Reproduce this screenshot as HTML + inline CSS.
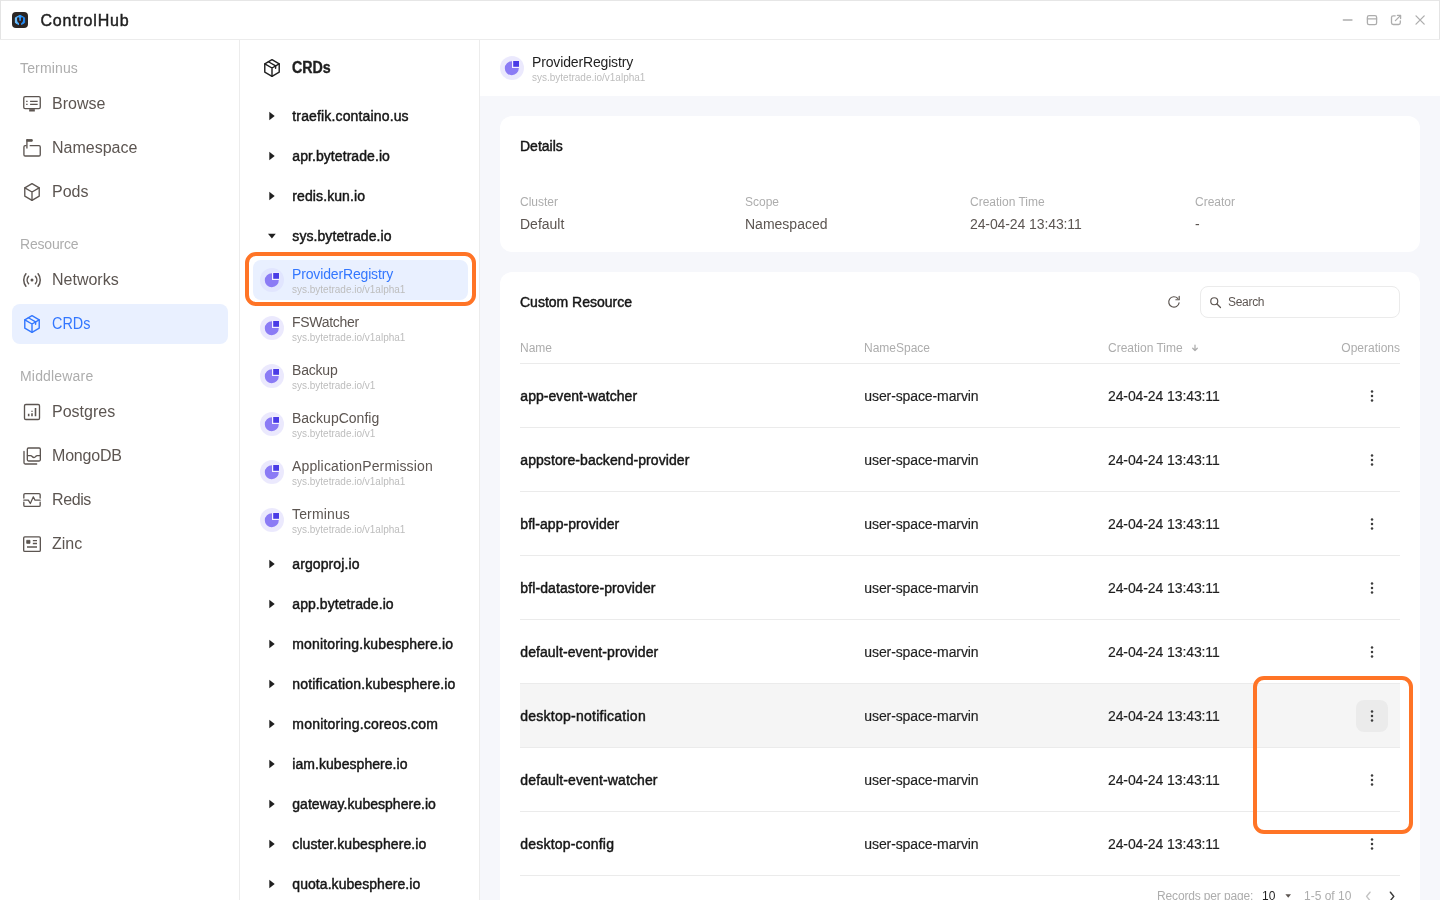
<!DOCTYPE html>
<html lang="en">
<head>
<meta charset="utf-8">
<title>ControlHub</title>
<style>
*{box-sizing:border-box;margin:0;padding:0}
html,body{width:1440px;height:900px;overflow:hidden;background:#fff}
body{font-family:"Liberation Sans",Arial,sans-serif;color:#1f1f1f;position:relative;-webkit-font-smoothing:antialiased}
#root{position:absolute;left:0;top:0;width:1440px;height:900px;will-change:transform}
.abs{position:absolute}
.t{position:absolute;white-space:nowrap;line-height:1}
svg{display:block;overflow:visible}
/* frame */
#frame-top{left:0;top:0;width:1440px;height:1px;background:#e6e6e6}
#frame-left{left:0;top:0;width:1px;height:39px;background:#e4e4e4}
#frame-right{left:1439px;top:0;width:1px;height:39px;background:#e4e4e4}
#hdr-line{left:0;top:39px;width:1440px;height:1px;background:#ececec}
#side-line{left:239px;top:40px;width:1px;height:860px;background:#ececec}
#mid-line{left:479px;top:40px;width:1px;height:860px;background:#ececec}
/* header */
#logo{left:12px;top:12px;width:16px;height:16px}
#app-title{left:40.5px;top:13px;letter-spacing:.8px;font-size:16px;color:#1f1f1f;-webkit-text-stroke:.45px #1f1f1f}
/* sidebar */
.sec{font-size:14px;color:#adadad;left:20px}
.nav{font-size:16px;color:#5c5551;left:52px}
.nav.sel{color:#3377ff}
#nav-sel{left:12px;top:304px;width:216px;height:40px;border-radius:8px;background:#e9f0ff}
.ico{position:absolute;width:20px;height:20px;left:22px}
/* mid column */
.grp{font-size:14px;color:#161616;left:292.3px;-webkit-text-stroke:.45px #161616}
.kid{font-size:14px;color:#5c5551;left:292px}
.kid.sel{color:#3377ff}
.sub{font-size:10px;color:#bdbdbd;left:292px}
.pie{position:absolute;width:24px;height:24px}
#kid-sel{left:252.5px;top:260px;width:215px;height:40px;border-radius:8px;background:#e9f0ff}
.hl{position:absolute;border:4px solid #ff7426;border-radius:11px}
/* main */
#main-bg{left:480px;top:96px;width:960px;height:804px;background:#f6f7fb}
.card{position:absolute;background:#fff;border-radius:12px}
.h500{font-size:14px;color:#161616;-webkit-text-stroke:.45px #161616}
.lbl{font-size:12px;color:#adadad}
.val{font-size:14px;color:#5c5551}
.th{font-size:12px;color:#adadad}
.row-line{position:absolute;left:520px;width:880px;height:1px;background:#ebebeb}
.nm{font-size:14px;color:#161616;left:520.3px;-webkit-text-stroke:.45px #161616}
.ns{font-size:14px;color:#1f1f1f;left:864.3px;-webkit-text-stroke:.15px #1f1f1f}
.tm{font-size:14px;color:#1f1f1f;left:1108px;-webkit-text-stroke:.15px #1f1f1f}
.pg{font-size:12px;color:#adadad}
</style>
</head>
<body>
<div id="root">
<!-- SECTION:FRAME -->
<div class="abs" id="main-bg"></div>
<div class="abs" id="frame-top"></div>
<div class="abs" id="frame-left"></div>
<div class="abs" id="frame-right"></div>
<div class="abs" id="hdr-line"></div>
<div class="abs" id="side-line"></div>
<div class="abs" id="mid-line"></div>
<!-- SECTION:HEADER -->
<svg class="abs" id="logo" viewBox="0 0 16 16">
<defs><linearGradient id="lg" x1="0" y1="0" x2="1" y2="0"><stop offset="0" stop-color="#7cc8ff"/><stop offset=".45" stop-color="#2f9dff"/><stop offset="1" stop-color="#1f86f2"/></linearGradient></defs>
<rect x="0" y="0" width="16" height="16" rx="4" fill="#2b2624"/>
<path d="M8 3.2L12.6 5.8V10.7L8 13.3L3.4 10.7V5.8Z" fill="url(#lg)" stroke="url(#lg)" stroke-width="1" stroke-linejoin="round"/>
<path d="M6.2 6.3V8Q6.2 10 8.1 10Q10 10 10 8V6.3M8.1 10V13.6" fill="none" stroke="#2b1f1f" stroke-width="2.2" stroke-linecap="round" stroke-linejoin="round"/>
</svg>
<div class="t" id="app-title">ControlHub</div>
<svg class="abs" style="left:1336px;top:10px;width:96px;height:20px" viewBox="1336 10 96 20" fill="none" stroke="#adadad" stroke-width="1.3" stroke-linecap="round" stroke-linejoin="round">
<path d="M1343.3 20 H1352"/>
<rect x="1367.4" y="15.6" width="9.2" height="9" rx="1.6"/><path d="M1367.4 18.9 H1376.6"/>
<path d="M1395.2 15.8 H1393.2 Q1391.5 15.8 1391.5 17.5 V22.8 Q1391.5 24.5 1393.2 24.5 H1398.6 Q1400.3 24.5 1400.3 22.8 V20.8"/><path d="M1395.4 20.6 L1400.4 15.6 M1397.4 15.4 H1400.6 V18.6"/>
<path d="M1416 15.9 L1424.2 24.1 M1424.2 15.9 L1416 24.1"/>
</svg>
<!-- SECTION:SIDEBAR -->
<div class="abs" id="nav-sel"></div>
<div class="t sec" style="top:61px;letter-spacing:0.15px">Terminus</div>
<div class="t sec" style="top:237px;letter-spacing:-0.2px">Resource</div>
<div class="t sec" style="top:369px;letter-spacing:0.18px">Middleware</div>
<div class="t nav" style="top:96px">Browse</div>
<div class="t nav" style="top:140px">Namespace</div>
<div class="t nav" style="top:184px">Pods</div>
<div class="t nav" style="top:272px">Networks</div>
<div class="t nav sel" style="top:316px;transform:scaleX(.9);transform-origin:0 0">CRDs</div>
<div class="t nav" style="top:404px">Postgres</div>
<div class="t nav" style="top:448px;letter-spacing:-0.2px">MongoDB</div>
<div class="t nav" style="top:492px;letter-spacing:-0.4px">Redis</div>
<div class="t nav" style="top:536px">Zinc</div>
<svg class="ico" style="top:94px;left:22px" viewBox="0 0 24 24" fill="none" stroke="#5c5551" stroke-width="1.6" stroke-linejoin="round" stroke-linecap="round"><rect x="2.1" y="3.2" width="19.8" height="14.4" rx="1.6"/><path d="M9.7 8.8H18.8M9.7 12.4H18.8M5 8.8H6.7M5 12.4H6.7" stroke-linecap="butt"/><path d="M8.6 19.6H15.4" stroke-width="2.8" stroke-linecap="butt"/></svg>
<svg class="ico" style="top:138px;left:22px" viewBox="0 0 24 24" fill="none" stroke="#5c5551" stroke-width="1.6" stroke-linejoin="round" stroke-linecap="round"><path d="M4.9 9.2H3.8Q2.3 9.2 2.3 10.7V20.1Q2.3 21.6 3.8 21.6H20.4Q21.9 21.6 21.9 20.1V10.7Q21.9 9.2 20.4 9.2H9.8"/><path d="M5.9 3V12.6" stroke-linecap="butt"/><rect x="5.6" y="1.8" width="6.8" height="2.2" rx=".4" fill="#5c5551" stroke-width="1"/></svg>
<svg class="ico" style="top:182px;left:22px" viewBox="0 0 24 24" fill="none" stroke="#5c5551" stroke-width="1.6" stroke-linejoin="round" stroke-linecap="round"><path d="M12 2L20.66 7V17L12 22L3.34 17V7Z"/><path d="M3.4 7.05L12 12L20.6 7.05M12 12V22"/></svg>
<svg class="ico" style="top:270px;left:22px" viewBox="0 0 24 24" fill="none" stroke="#5c5551" stroke-width="1.8" stroke-linejoin="round" stroke-linecap="round"><circle cx="12" cy="12" r="1.8" fill="#5c5551" stroke="none"/><path d="M7.9 7.5A6.8 6.8 0 0 0 7.9 16.5M16.1 7.5A6.8 6.8 0 0 1 16.1 16.5M4.7 4.6A11.8 11.8 0 0 0 4.7 19.4M19.3 4.6A11.8 11.8 0 0 1 19.3 19.4"/></svg>
<svg class="ico" style="top:314px;left:22px" viewBox="0 0 24 24" fill="none" stroke="#3377ff" stroke-width="1.7" stroke-linejoin="round" stroke-linecap="round"><path d="M12 2L20.66 7V17L12 22L3.34 17V7Z"/><path d="M3.4 7.05L12 12L20.6 7.05M12 12V22"/><path d="M7.67 4.5L16.33 9.5V12.2"/></svg>
<svg class="ico" style="top:402px;left:22px" viewBox="0 0 24 24" fill="none" stroke="#5c5551" stroke-width="1.6" stroke-linejoin="round" stroke-linecap="round"><rect x="3" y="3" width="18" height="18" rx="1.6"/><path d="M8 14.2V17M12 13.4V17M12 10.6V11.6M16.2 7.2V17" stroke-width="1.9" stroke-linecap="butt"/></svg>
<svg class="ico" style="top:446px;left:22px" viewBox="0 0 24 24" fill="none" stroke="#5c5551" stroke-width="1.6" stroke-linejoin="round" stroke-linecap="round"><rect x="6.4" y="2.4" width="15.6" height="15.6" rx="1.4"/><path d="M2.4 6.6V20.2Q2.4 21.6 3.8 21.6H17.6"/><path d="M6.6 11.6H10.2Q11.4 11.6 12.2 12.6Q13.2 13.8 14.4 13.8Q15.6 13.8 16.4 12.6Q17.2 11.6 18.4 11.6H21.8"/></svg>
<svg class="ico" style="top:490px;left:22px" viewBox="0 0 24 24" fill="none" stroke="#5c5551" stroke-width="1.6" stroke-linejoin="round" stroke-linecap="round"><path d="M2.2 9.6V5.8Q2.2 4.4 3.6 4.4H20.4Q21.8 4.4 21.8 5.8V9.6M2.2 14.6V18.2Q2.2 19.6 3.6 19.6H20.4Q21.8 19.6 21.8 18.2V14.6"/><path d="M2.2 12.2H7.6L10 16.2L13.6 8.2L15.6 12.2H21.8" stroke-width="1.5"/></svg>
<svg class="ico" style="top:534px;left:22px" viewBox="0 0 24 24" fill="none" stroke="#5c5551" stroke-width="1.6" stroke-linejoin="round" stroke-linecap="round"><rect x="2" y="3.4" width="20" height="17.4" rx="1.4"/><rect x="6" y="7.6" width="3.6" height="3.6" fill="#5c5551" stroke-width="1"/><path d="M13 8H18M13 11.4H18M6 15.6H18" stroke-linecap="butt"/></svg>
<!-- SECTION:MID -->
<div class="abs" id="kid-sel"></div>
<svg class="ico" style="top:58px;left:262px" viewBox="0 0 24 24" fill="none" stroke="#1f1f1f" stroke-width="1.7" stroke-linejoin="round" stroke-linecap="round"><path d="M12 2L20.66 7V17L12 22L3.34 17V7Z"/><path d="M3.4 7.05L12 12L20.6 7.05M12 12V22"/><path d="M7.67 4.5L16.33 9.5V12.2"/></svg>
<div class="t" id="mid-title" style="left:292px;top:60px;font-size:16px;font-weight:700;color:#1f1f1f;-webkit-text-stroke:.4px #1f1f1f;transform:scaleX(.89);transform-origin:0 0">CRDs</div>
<svg class="abs" style="left:260px;top:100px;width:24px;height:800px" viewBox="260 100 24 800" fill="#1f1f1f"><path d="M269.3 111.8L274.7 116L269.3 120.2Z"/><path d="M269.3 151.8L274.7 156L269.3 160.2Z"/><path d="M269.3 191.8L274.7 196L269.3 200.2Z"/><path d="M268 233.8H275.8L271.9 238.4Z"/><path d="M269.3 559.8L274.7 564L269.3 568.2Z"/><path d="M269.3 599.8L274.7 604L269.3 608.2Z"/><path d="M269.3 639.8L274.7 644L269.3 648.2Z"/><path d="M269.3 679.8L274.7 684L269.3 688.2Z"/><path d="M269.3 719.8L274.7 724L269.3 728.2Z"/><path d="M269.3 759.8L274.7 764L269.3 768.2Z"/><path d="M269.3 799.8L274.7 804L269.3 808.2Z"/><path d="M269.3 839.8L274.7 844L269.3 848.2Z"/><path d="M269.3 879.8L274.7 884L269.3 888.2Z"/></svg>
<div class="t grp" style="top:109px;letter-spacing:0.15px">traefik.containo.us</div>
<div class="t grp" style="top:149px;letter-spacing:0.07px">apr.bytetrade.io</div>
<div class="t grp" style="top:189px;letter-spacing:0.1px">redis.kun.io</div>
<div class="t grp" style="top:229px;letter-spacing:0.08px">sys.bytetrade.io</div>
<div class="t grp" style="top:557px;letter-spacing:0.1px">argoproj.io</div>
<div class="t grp" style="top:597px;letter-spacing:0.06px">app.bytetrade.io</div>
<div class="t grp" style="top:637px;letter-spacing:0.15px">monitoring.kubesphere.io</div>
<div class="t grp" style="top:677px;letter-spacing:0.17px">notification.kubesphere.io</div>
<div class="t grp" style="top:717px;letter-spacing:0.2px">monitoring.coreos.com</div>
<div class="t grp" style="top:757px;letter-spacing:0.05px">iam.kubesphere.io</div>
<div class="t grp" style="top:797px;letter-spacing:0.03px">gateway.kubesphere.io</div>
<div class="t grp" style="top:837px;letter-spacing:0.08px">cluster.kubesphere.io</div>
<div class="t grp" style="top:877px;letter-spacing:0.06px">quota.kubesphere.io</div>
<svg class="pie" style="left:260px;top:268px" viewBox="0 0 24 24"><circle cx="12" cy="12" r="12" fill="#8b7bf5" fill-opacity="0.09"/><path d="M12 5.2A7 7 0 1 0 18.8 12H12Z" fill="#8b7bf5"/><rect x="12" y="4.4" width="7.6" height="7.6" fill="#f4f1ff"/><rect x="13.2" y="5" width="5.8" height="5.8" fill="#4a3be6"/></svg>
<div class="t kid sel" style="top:267px;letter-spacing:-0.15px">ProviderRegistry</div><div class="t sub" style="top:285px">sys.bytetrade.io/v1alpha1</div>
<svg class="pie" style="left:260px;top:316px" viewBox="0 0 24 24"><circle cx="12" cy="12" r="12" fill="#8b7bf5" fill-opacity="0.17"/><path d="M12 5.2A7 7 0 1 0 18.8 12H12Z" fill="#8b7bf5"/><rect x="12" y="4.4" width="7.6" height="7.6" fill="#f4f1ff"/><rect x="13.2" y="5" width="5.8" height="5.8" fill="#4a3be6"/></svg>
<div class="t kid" style="top:315px;letter-spacing:-0.3px">FSWatcher</div><div class="t sub" style="top:333px">sys.bytetrade.io/v1alpha1</div>
<svg class="pie" style="left:260px;top:364px" viewBox="0 0 24 24"><circle cx="12" cy="12" r="12" fill="#8b7bf5" fill-opacity="0.17"/><path d="M12 5.2A7 7 0 1 0 18.8 12H12Z" fill="#8b7bf5"/><rect x="12" y="4.4" width="7.6" height="7.6" fill="#f4f1ff"/><rect x="13.2" y="5" width="5.8" height="5.8" fill="#4a3be6"/></svg>
<div class="t kid" style="top:363px;letter-spacing:-0.2px">Backup</div><div class="t sub" style="top:381px">sys.bytetrade.io/v1</div>
<svg class="pie" style="left:260px;top:412px" viewBox="0 0 24 24"><circle cx="12" cy="12" r="12" fill="#8b7bf5" fill-opacity="0.17"/><path d="M12 5.2A7 7 0 1 0 18.8 12H12Z" fill="#8b7bf5"/><rect x="12" y="4.4" width="7.6" height="7.6" fill="#f4f1ff"/><rect x="13.2" y="5" width="5.8" height="5.8" fill="#4a3be6"/></svg>
<div class="t kid" style="top:411px">BackupConfig</div><div class="t sub" style="top:429px">sys.bytetrade.io/v1</div>
<svg class="pie" style="left:260px;top:460px" viewBox="0 0 24 24"><circle cx="12" cy="12" r="12" fill="#8b7bf5" fill-opacity="0.17"/><path d="M12 5.2A7 7 0 1 0 18.8 12H12Z" fill="#8b7bf5"/><rect x="12" y="4.4" width="7.6" height="7.6" fill="#f4f1ff"/><rect x="13.2" y="5" width="5.8" height="5.8" fill="#4a3be6"/></svg>
<div class="t kid" style="top:459px;letter-spacing:0.15px">ApplicationPermission</div><div class="t sub" style="top:477px">sys.bytetrade.io/v1alpha1</div>
<svg class="pie" style="left:260px;top:508px" viewBox="0 0 24 24"><circle cx="12" cy="12" r="12" fill="#8b7bf5" fill-opacity="0.17"/><path d="M12 5.2A7 7 0 1 0 18.8 12H12Z" fill="#8b7bf5"/><rect x="12" y="4.4" width="7.6" height="7.6" fill="#f4f1ff"/><rect x="13.2" y="5" width="5.8" height="5.8" fill="#4a3be6"/></svg>
<div class="t kid" style="top:507px;letter-spacing:0.15px">Terminus</div><div class="t sub" style="top:525px">sys.bytetrade.io/v1alpha1</div>
<div class="hl" style="left:245px;top:252px;width:231px;height:54px"></div>
<!-- SECTION:MAIN -->
<svg class="pie" style="left:500px;top:56px" viewBox="0 0 24 24"><circle cx="12" cy="12" r="12" fill="#8b7bf5" fill-opacity=".17"/><path d="M12 5.2A7 7 0 1 0 18.8 12H12Z" fill="#8b7bf5"/><rect x="12" y="4.4" width="7.6" height="7.6" fill="#f4f1ff"/><rect x="13.2" y="5" width="5.8" height="5.8" fill="#4a3be6"/></svg>
<div class="t" id="pg-title" style="left:532px;top:55px;font-size:14px;color:#1f1f1f;letter-spacing:-0.15px">ProviderRegistry</div>
<div class="t sub" id="pg-sub" style="left:532px;top:73px">sys.bytetrade.io/v1alpha1</div>
<div class="card" style="left:500px;top:116px;width:920px;height:136px"></div>
<div class="t h500" style="left:520px;top:139px">Details</div>
<div class="t lbl" style="left:520px;top:196px">Cluster</div><div class="t val" style="left:520px;top:217px">Default</div>
<div class="t lbl" style="left:745px;top:196px">Scope</div><div class="t val" style="left:745px;top:217px">Namespaced</div>
<div class="t lbl" style="left:970px;top:196px">Creation Time</div><div class="t val" style="left:970px;top:217px;letter-spacing:-0.1px">24-04-24 13:43:11</div>
<div class="t lbl" style="left:1195px;top:196px">Creator</div><div class="t val" style="left:1195px;top:217px">-</div>
<div class="card" style="left:500px;top:272px;width:920px;height:640px;border-radius:12px 12px 0 0"></div>
<div class="t h500" style="left:520px;top:295px">Custom Resource</div>
<svg class="abs" style="left:1166px;top:294px;width:16px;height:16px" viewBox="0 0 24 24" fill="none" stroke="#5c5551" stroke-width="1.8" stroke-linecap="round" stroke-linejoin="round"><path d="M19.6 13.2A7.8 7.8 0 1 1 17.6 6.6"/><path d="M19.8 3.6V8.6H14.8" /></svg>
<div class="abs" style="left:1200px;top:286px;width:200px;height:32px;border:1px solid #ebebeb;border-radius:8px;background:#fff"></div>
<svg class="abs" style="left:1208px;top:294.6px;width:15px;height:15px" viewBox="0 0 24 24" fill="none" stroke="#5c5551" stroke-width="1.9" stroke-linecap="round"><circle cx="10" cy="10" r="5.6"/><path d="M14.4 14.4L20 20"/></svg>
<div class="t" id="search-ph" style="left:1228px;top:296px;font-size:12px;color:#5c5551;letter-spacing:-0.3px">Search</div>
<div class="t th" style="left:520px;top:342px">Name</div><div class="t th" style="left:864px;top:342px">NameSpace</div><div class="t th" style="left:1108px;top:342px">Creation Time</div><div class="t th" id="th-ops" style="right:40px;top:342px">Operations</div>
<svg class="abs" style="left:1190.2px;top:343px;width:10px;height:10px" viewBox="0 0 24 24" fill="none" stroke="#adadad" stroke-width="3" stroke-linecap="round" stroke-linejoin="round"><path d="M12 5V18M6.5 12.5L12 18L17.5 12.5"/></svg>
<div class="row-line" style="top:363px"></div>
<div class="abs" style="left:520px;top:684px;width:880px;height:63px;background:#f5f5f5"></div>
<div class="abs" style="left:1356px;top:700px;width:32px;height:32px;border-radius:8px;background:#ebebeb"></div>
<div class="t nm" style="top:389px;letter-spacing:0.05px">app-event-watcher</div><div class="t ns" style="top:389px;letter-spacing:-0.1px">user-space-marvin</div><div class="t tm" style="top:389px;letter-spacing:-0.1px">24-04-24 13:43:11</div>
<div class="row-line" style="top:427px"></div>
<div class="t nm" style="top:453px;letter-spacing:0.07px">appstore-backend-provider</div><div class="t ns" style="top:453px;letter-spacing:-0.1px">user-space-marvin</div><div class="t tm" style="top:453px;letter-spacing:-0.1px">24-04-24 13:43:11</div>
<div class="row-line" style="top:491px"></div>
<div class="t nm" style="top:517px;letter-spacing:0.06px">bfl-app-provider</div><div class="t ns" style="top:517px;letter-spacing:-0.1px">user-space-marvin</div><div class="t tm" style="top:517px;letter-spacing:-0.1px">24-04-24 13:43:11</div>
<div class="row-line" style="top:555px"></div>
<div class="t nm" style="top:581px;letter-spacing:0.1px">bfl-datastore-provider</div><div class="t ns" style="top:581px;letter-spacing:-0.1px">user-space-marvin</div><div class="t tm" style="top:581px;letter-spacing:-0.1px">24-04-24 13:43:11</div>
<div class="row-line" style="top:619px"></div>
<div class="t nm" style="top:645px;letter-spacing:0.08px">default-event-provider</div><div class="t ns" style="top:645px;letter-spacing:-0.1px">user-space-marvin</div><div class="t tm" style="top:645px;letter-spacing:-0.1px">24-04-24 13:43:11</div>
<div class="row-line" style="top:683px"></div>
<div class="t nm" style="top:709px;letter-spacing:0.25px">desktop-notification</div><div class="t ns" style="top:709px;letter-spacing:-0.1px">user-space-marvin</div><div class="t tm" style="top:709px;letter-spacing:-0.1px">24-04-24 13:43:11</div>
<div class="row-line" style="top:747px"></div>
<div class="t nm" style="top:773px;letter-spacing:0.13px">default-event-watcher</div><div class="t ns" style="top:773px;letter-spacing:-0.1px">user-space-marvin</div><div class="t tm" style="top:773px;letter-spacing:-0.1px">24-04-24 13:43:11</div>
<div class="row-line" style="top:811px"></div>
<div class="t nm" style="top:837px;letter-spacing:0.2px">desktop-config</div><div class="t ns" style="top:837px;letter-spacing:-0.1px">user-space-marvin</div><div class="t tm" style="top:837px;letter-spacing:-0.1px">24-04-24 13:43:11</div>
<div class="row-line" style="top:875px"></div>
<svg class="abs" style="left:1366px;top:380px;width:12px;height:480px" viewBox="1366 380 12 480" fill="#3d3d3d"><circle cx="1372" cy="391.6" r="1.25"/><circle cx="1372" cy="396.0" r="1.25"/><circle cx="1372" cy="400.4" r="1.25"/><circle cx="1372" cy="455.6" r="1.25"/><circle cx="1372" cy="460.0" r="1.25"/><circle cx="1372" cy="464.4" r="1.25"/><circle cx="1372" cy="519.6" r="1.25"/><circle cx="1372" cy="524.0" r="1.25"/><circle cx="1372" cy="528.4" r="1.25"/><circle cx="1372" cy="583.6" r="1.25"/><circle cx="1372" cy="588.0" r="1.25"/><circle cx="1372" cy="592.4" r="1.25"/><circle cx="1372" cy="647.6" r="1.25"/><circle cx="1372" cy="652.0" r="1.25"/><circle cx="1372" cy="656.4" r="1.25"/><circle cx="1372" cy="711.6" r="1.25"/><circle cx="1372" cy="716.0" r="1.25"/><circle cx="1372" cy="720.4" r="1.25"/><circle cx="1372" cy="775.6" r="1.25"/><circle cx="1372" cy="780.0" r="1.25"/><circle cx="1372" cy="784.4" r="1.25"/><circle cx="1372" cy="839.6" r="1.25"/><circle cx="1372" cy="844.0" r="1.25"/><circle cx="1372" cy="848.4" r="1.25"/></svg>
<div class="t pg" style="left:1157px;top:890px;letter-spacing:-0.15px">Records per page:</div><div class="t pg" style="left:1262px;top:890px;color:#1f1f1f">10</div><svg class="abs" style="left:1280px;top:890px;width:16px;height:10px" viewBox="1280 890 16 10"><path d="M1285.4 894.2H1291L1288.2 897.8Z" fill="#5c5551"/></svg><div class="t pg" style="left:1304px;top:890px">1-5 of 10</div>
<svg class="abs" style="left:1360px;top:888px;width:40px;height:14px" viewBox="1360 888 40 14" fill="none" stroke-width="1.5" stroke-linecap="round" stroke-linejoin="round"><path d="M1370 892.2L1366.6 896.4L1370 900.6" stroke="#c4c4c4"/><path d="M1390.4 892.2L1393.8 896.4L1390.4 900.6" stroke="#3a3a3a"/></svg>
<div class="hl" style="left:1253px;top:676px;width:160px;height:158px"></div>
</div>
</body>
</html>
